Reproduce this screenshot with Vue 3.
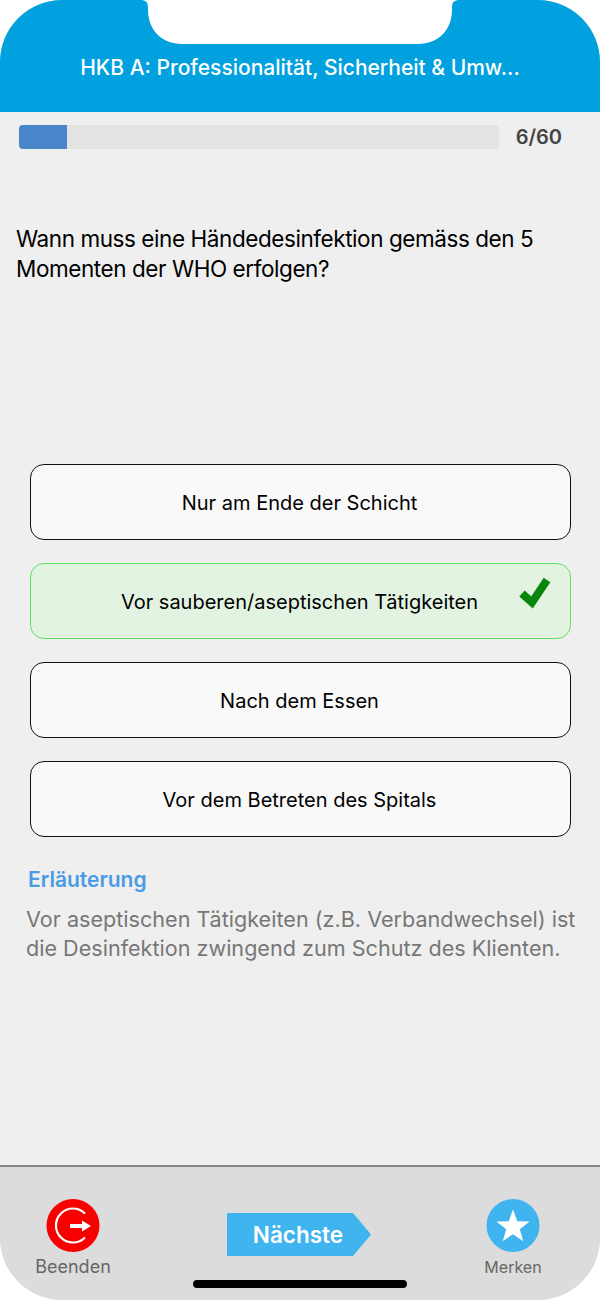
<template>
  <div class="quiz-screen">
    <!-- notch overlay -->
    <svg class="notch" width="320" height="44" viewBox="0 0 320 44">
      <path d="M0 0 H320 C314 0 312 2 312 8 V10 C312 30 298 44 278 44 H42 C22 44 8 30 8 10 V8 C8 2 6 0 0 0 Z" fill="#fff" />
    </svg>

    <header class="top-bar">
      <h1 class="title">{{ title }}</h1>
    </header>

    <main class="content">
      <div class="progress-row">
        <div class="progress-track">
          <div class="progress-fill" :style="{ width: progress + '%' }"></div>
        </div>
        <span class="progress-count">{{ current }}/{{ total }}</span>
      </div>

      <p class="question">{{ question }}</p>

      <div class="answers">
        <div
          v-for="answer in answers"
          :key="answer.text"
          class="answer"
          :class="{ correct: answer.correct }"
        >
          {{ answer.text }}
          <svg v-if="answer.correct" class="check" width="34" height="34" viewBox="0 0 34 34">
            <path d="M3 18.5 L13 27.5 L28 5" fill="none" stroke="#0a860a" stroke-width="8" stroke-linejoin="miter" />
          </svg>
        </div>
      </div>

      <h2 class="explain-title">Erläuterung</h2>
      <p class="explain-text">{{ explanation }}</p>
    </main>

    <footer class="bottom-bar">
      <div class="tab">
        <svg width="54" height="54" viewBox="0 0 54 54">
          <circle cx="27" cy="26.5" r="26.5" fill="#f70000" />
          <path d="M39 14.5 A17 17 0 1 0 39 38.5" fill="none" stroke="#fff" stroke-width="2.2" />
          <path d="M24 25 H36 V21.5 L45 27 L36 32.5 V29 H24 Z" fill="#fff" />
        </svg>
        <span class="tab-label">Beenden</span>
      </div>
      <div class="next-wrap">
        <div class="next-btn">Nächste</div>
      </div>
      <div class="tab">
        <svg width="54" height="54" viewBox="0 0 54 54">
          <circle cx="27" cy="26.5" r="26.5" fill="#3fb4ee" />
          <polygon points="27,10.5 31.2,22.2 43.6,22.6 33.8,30.2 37.3,42.2 27,35.2 16.7,42.2 20.2,30.2 10.4,22.6 22.8,22.2" fill="#fff" />
        </svg>
        <span class="tab-label small">Merken</span>
      </div>
      <div class="home-indicator"></div>
    </footer>
  </div>
</template>

<script setup>
const title = 'HKB A: Professionalität, Sicherheit & Umw...'
const current = 6
const total = 60
const progress = 10
const question = 'Wann muss eine Händedesinfektion gemäss den 5 Momenten der WHO erfolgen?'
const explanation = 'Vor aseptischen Tätigkeiten (z.B. Verbandwechsel) ist die Desinfektion zwingend zum Schutz des Klienten.'

const answers = [
  { text: 'Nur am Ende der Schicht' },
  { text: 'Vor sauberen/aseptischen Tätigkeiten', correct: true },
  { text: 'Nach dem Essen' },
  { text: 'Vor dem Betreten des Spitals' },
]
</script>

<style>
html,
body {
  background: #fff;
}
</style>

<style scoped>
.quiz-screen {
  position: relative;
  width: 600px;
  height: 1300px;
  display: flex;
  flex-direction: column;
  border-radius: 62px;
  overflow: hidden;
  background: #efefef;
  font-family: Inter, "Noto Sans", sans-serif;
}

.notch {
  position: absolute;
  top: 0;
  left: 140px;
}

.top-bar {
  height: 112px;
  flex-shrink: 0;
  box-sizing: border-box;
  padding-top: 54px;
  background: #00a1de;
  text-align: center;
}

.title {
  margin: 0;
  color: #fff;
  font-size: 21px;
  font-weight: 500;
  line-height: 28px;
}

.content {
  flex: 1;
  min-height: 0;
}

.progress-row {
  display: flex;
  align-items: center;
  padding: 13px 38px 0 19px;
}

.progress-track {
  width: 480px;
  height: 24px;
  border-radius: 4px;
  background: #e2e3e3;
  overflow: hidden;
}

.progress-fill {
  height: 100%;
  background: #4a87ca;
}

.progress-count {
  margin-left: auto;
  color: #444;
  font-size: 20px;
  font-weight: 600;
}

.question {
  height: 210px;
  margin: 0;
  padding: 75px 16px 0;
  box-sizing: border-box;
  color: #000;
  font-size: 22.5px;
  letter-spacing: -0.43px;
  line-height: 30px;
}

.answers {
  display: flex;
  flex-direction: column;
  gap: 23px;
  margin: 0 29px 0 30px;
  padding-top: 105px;
}

.answer {
  position: relative;
  height: 76px;
  box-sizing: border-box;
  padding: 2px 2px 0 0;
  display: flex;
  align-items: center;
  justify-content: center;
  border: 1px solid #111;
  border-radius: 14px;
  background: #f9f9f9;
  color: #000;
  font-size: 20px;
}

.answer.correct {
  border-color: #5fe05f;
  background: #e3f3e2;
}

.check {
  position: absolute;
  top: 11px;
  right: 17px;
}

.explain-title {
  margin: 30px 0 0 28px;
  color: #4a9be6;
  font-size: 21px;
  font-weight: 600;
  line-height: 26px;
}

.explain-text {
  margin: 12px 0 0 26px;
  width: 562px;
  color: #777;
  font-size: 21.6px;
  line-height: 29px;
}

.bottom-bar {
  position: relative;
  height: 135px;
  flex-shrink: 0;
  box-sizing: border-box;
  display: grid;
  grid-template-columns: 146px 306px 122px;
  padding-top: 32px;
  border-top: 2px solid #888;
  background: #dcdcdc;
}

.tab {
  display: flex;
  flex-direction: column;
  align-items: center;
  height: 90px;
}

.tab-label {
  margin-top: 3px;
  color: #666;
  font-size: 18px;
  line-height: 22px;
}

.tab-label.small {
  font-size: 16px;
}

.next-wrap {
  display: flex;
  justify-content: center;
  padding-top: 14px;
}

.next-btn {
  width: 144px;
  height: 43px;
  box-sizing: border-box;
  padding-right: 2px;
  display: flex;
  align-items: center;
  justify-content: center;
  background: #3fb4ee;
  clip-path: polygon(0 0, 126px 0, 100% 50%, 126px 100%, 0 100%);
  color: #fff;
  font-size: 22.5px;
  font-weight: 600;
}

.home-indicator {
  position: absolute;
  left: 193px;
  bottom: 12px;
  width: 214px;
  height: 8px;
  border-radius: 4px;
  background: #000;
}
</style>
